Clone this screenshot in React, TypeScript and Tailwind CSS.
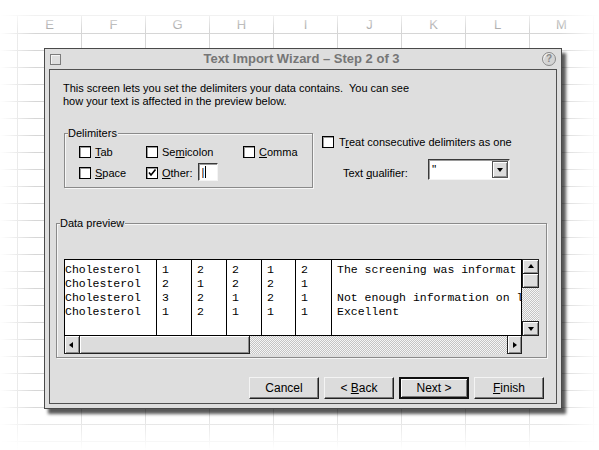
import React from "react";

/** Spreadsheet backdrop + Text Import Wizard (step 2) */
const COLS = ["", "E", "F", "G", "H", "I", "J", "K", "L", "M", ""];
const ui = "font-['Liberation_Sans',Arial,sans-serif]";
const mono = "font-['Liberation_Mono','Courier_New',monospace]";

const ROWS: string[][] = [
  ["Cholesterol", "1", "2", "2", "1", "2", "The screening was informat"],
  ["Cholesterol", "2", "1", "2", "2", "1", ""],
  ["Cholesterol", "3", "2", "1", "2", "1", "Not enough information on l"],
  ["Cholesterol", "1", "2", "1", "1", "1", "Excellent"],
];
const COL_W = ["w-[92px]", "w-[35px]", "w-[35px]", "w-[35px]", "w-[34px]", "w-[36px]"];

const U = ({ children }: { children: React.ReactNode }) => <span className="underline underline-offset-1">{children}</span>;

const Check = ({ on = false }: { on?: boolean }) => (
  <span className="relative inline-block h-[12px] w-[12px] shrink-0 border border-black bg-white shadow-[inset_1px_1px_0_#9a9a9a]">
    {on && (
      <svg viewBox="0 0 10 10" className="absolute left-0 top-0 h-[10px] w-[10px]">
        <path d="M2 4.5 L4 7 L8.5 1.5" fill="none" stroke="#000" strokeWidth="1.6" />
      </svg>
    )}
  </span>
);

const Tri = ({ dir }: { dir: "up" | "down" | "left" | "right" }) => {
  const d = { up: "M1 5 L4 1 L7 5Z", down: "M1 2 L4 6 L7 2Z", left: "M5 1 L1 4 L5 7Z", right: "M2 1 L6 4 L2 7Z" }[dir];
  return <svg viewBox="0 0 8 8" className="h-[8px] w-[8px]"><path d={d} fill="#000" /></svg>;
};

const bevel = "bg-[#dcdcdc] border border-[#222] shadow-[inset_1px_1px_0_#fff,inset_-1px_-1px_0_#8c8c8c]";
const dither = "bg-[repeating-conic-gradient(#c4c4c4_0_25%,#f6f6f6_0_50%)] bg-[size:2px_2px]";

const Btn = ({ children, def = false }: { children: React.ReactNode; def?: boolean }) => (
  <div className={`flex h-[22px] w-[70px] items-center justify-center bg-[#dcdcdc] text-[12px] text-black ${def ? "border-2 border-[#111] shadow-[inset_1px_1px_0_#fff,inset_-1px_-1px_0_#7a7a7a]" : "border border-[#222] border-l-[#f4f4f4] border-t-[#f4f4f4] shadow-[inset_-1px_-1px_0_#7a7a7a]"}`}>
    <span className="whitespace-pre">{children}</span>
  </div>
);

const Group = ({ label, className, children }: { label: string; className: string; children: React.ReactNode }) => (
  <div className={`relative border border-[#8a8a8a] shadow-[inset_1px_1px_0_#f6f6f6,1px_1px_0_#f6f6f6] ${className}`}>
    <span className="absolute left-[3px] top-[-8px] bg-[#dedede] pr-[1px] text-[11px] leading-[14px] text-black">{label}</span>
    {children}
  </div>
);

export default function App() {
  return (
    <div className={`relative h-[450px] w-[599px] overflow-hidden bg-white ${ui}`}>
      {/* sheet */}
      <div className="pt-[15px]">
        <div className="ml-[-46px] flex h-[19px] border-y border-[#d6d6d6]">
          {COLS.map((c, i) => (
            <div key={i} className="flex w-[64px] shrink-0 items-center justify-center border-r border-[#d6d6d6] text-[13px] font-light text-[#a8a8a8]">{c}</div>
          ))}
        </div>
        <div className="h-[420px] bg-[linear-gradient(to_right,#d6d6d6_1px,transparent_1px),linear-gradient(to_bottom,transparent_16px,#d6d6d6_16px)] bg-[size:64px_17px] bg-[position:17px_0]" />
      </div>
      {/* vignette */}
      <div className="pointer-events-none absolute inset-0 bg-[linear-gradient(to_right,#fff_0,rgba(255,255,255,0)_35px),linear-gradient(to_left,#fff_0,rgba(255,255,255,0)_40px),linear-gradient(to_bottom,#fff_8px,rgba(255,255,255,0)_30px),linear-gradient(to_top,#fff_0,rgba(255,255,255,0)_45px)]" />

      {/* dialog */}
      <div className="absolute left-[44px] top-[48px] flex h-[361px] w-[518px] flex-col border border-[#4a4a4a] bg-[#dedede] shadow-[4px_5px_3px_rgba(0,0,0,0.65)]">
        <div className="flex h-[20px] shrink-0 items-center px-[5px]">
          <span className="h-[11px] w-[11px] border border-[#7c7c7c] shadow-[inset_1px_1px_0_#f4f4f4]" />
          <div className="flex-1 text-center text-[13px] font-bold text-[#767676]">Text Import Wizard – Step 2 of 3</div>
          <span className="flex h-[14px] w-[14px] items-center justify-center rounded-full border border-[#8a8a8a] bg-[#d4d4d4] text-[10px] font-bold leading-none text-[#8a8a8a] shadow-[inset_1px_1px_0_#f2f2f2]">?</span>
        </div>

        <div className="mx-[4px] mb-[4px] flex flex-1 flex-col border border-[#505050] text-black">
          <p className="ml-[13px] mt-[12px] text-[11px] leading-[13px]">
            This screen lets you set the delimiters your data contains.&nbsp; You can see<br />how your text is affected in the preview below.
          </p>

          <div className="mt-[25px] flex">
            <Group label="Delimiters" className="ml-[14px] h-[55px] w-[249px]">
              <div className="pl-[14px] pt-[12px] text-[11px]">
                <div className="flex h-[12px] items-center">
                  <div className="flex w-[67px] items-center gap-[4px]"><Check /><span><U>T</U>ab</span></div>
                  <div className="flex w-[97px] items-center gap-[4px]"><Check /><span>Se<U>m</U>icolon</span></div>
                  <div className="flex items-center gap-[4px]"><Check /><span><U>C</U>omma</span></div>
                </div>
                <div className="mt-[5px] flex h-[18px] items-end">
                  <div className="flex w-[67px] items-center gap-[4px]"><Check /><span><U>S</U>pace</span></div>
                  <div className="flex items-center gap-[4px]"><Check on /><span><U>O</U>ther:</span></div>
                  <div className="ml-[5px] flex h-[18px] w-[20px] items-center border border-[#3a3a3a] border-b-[#f4f4f4] border-r-[#f4f4f4] bg-white pl-[3px] shadow-[inset_1px_1px_0_#9a9a9a]">
                    <span className="leading-none">|</span><span className="ml-[1px] h-[12px] w-px bg-black" />
                  </div>
                </div>
              </div>
            </Group>

            <div className="ml-[9px] mt-[1px] text-[11px]">
              <div className="flex items-center gap-[5px]"><Check /><span>T<U>r</U>eat consecutive delimiters as one</span></div>
              <div className="ml-[21px] mt-[8px] flex items-center">
                <span className="w-[85px] pt-[6px]">Text <U>q</U>ualifier:</span>
                <div className="flex h-[21px] w-[82px] items-center border border-[#3a3a3a] border-b-[#f4f4f4] border-r-[#f4f4f4] bg-white shadow-[inset_1px_1px_0_#9a9a9a]">
                  <span className="flex-1 pl-[3px] text-[12px] leading-none">"</span>
                  <span className={`mr-[1px] flex h-[17px] w-[16px] items-center justify-center ${bevel} border-[#555]`}><Tri dir="down" /></span>
                </div>
              </div>
            </div>
          </div>

          <Group label="Data preview" className="ml-[6px] mt-[35px] h-[135px] w-[491px]">
            <div className="ml-[7px] mt-[35px] flex">
              <div className="flex flex-col">
                <div className="flex">
                  <div className="flex h-[77px] w-[458px] overflow-hidden border border-black bg-white">
                    {COL_W.map((w, ci) => (
                      <div key={ci} className={`${w} shrink-0 border-r border-black pt-[3px] ${ci === 0 ? "pl-0" : "pl-[5px]"} ${mono} text-[11.5px] leading-[14px]`}>
                        {ROWS.map((r, ri) => <div key={ri} className="h-[14px] whitespace-pre">{r[ci]}</div>)}
                      </div>
                    ))}
                    <div className={`min-w-0 flex-1 overflow-hidden pl-[5px] pt-[3px] ${mono} text-[11.5px] leading-[14px]`}>
                      {ROWS.map((r, ri) => <div key={ri} className="h-[14px] whitespace-pre">{r[6]}</div>)}
                    </div>
                  </div>
                  <div className="flex h-[77px] w-[17px] flex-col">
                    <div className={`flex h-[15px] items-center justify-center ${bevel}`}><Tri dir="up" /></div>
                    <div className={`h-[14px] ${bevel} border-t-0`} />
                    <div className={`flex-1 ${dither}`} />
                    <div className={`flex h-[15px] items-center justify-center ${bevel}`}><Tri dir="down" /></div>
                  </div>
                </div>
                <div className="flex h-[18px] w-[458px]">
                  <div className={`flex w-[16px] items-center justify-center ${bevel} border-t-0`}><Tri dir="left" /></div>
                  <div className={`w-[170px] ${bevel} border-l-0 border-t-0`} />
                  <div className={`flex-1 ${dither}`} />
                  <div className={`flex w-[15px] items-center justify-center ${bevel} border-t-0`}><Tri dir="right" /></div>
                </div>
              </div>
            </div>
          </Group>

          <div className="mr-[12px] mt-[19px] flex justify-end gap-[5px]">
            <Btn>Cancel</Btn>
            <Btn>&lt; <U>B</U>ack</Btn>
            <Btn def>Next &gt;</Btn>
            <Btn><U>F</U>inish</Btn>
          </div>
        </div>
      </div>
    </div>
  );
}
